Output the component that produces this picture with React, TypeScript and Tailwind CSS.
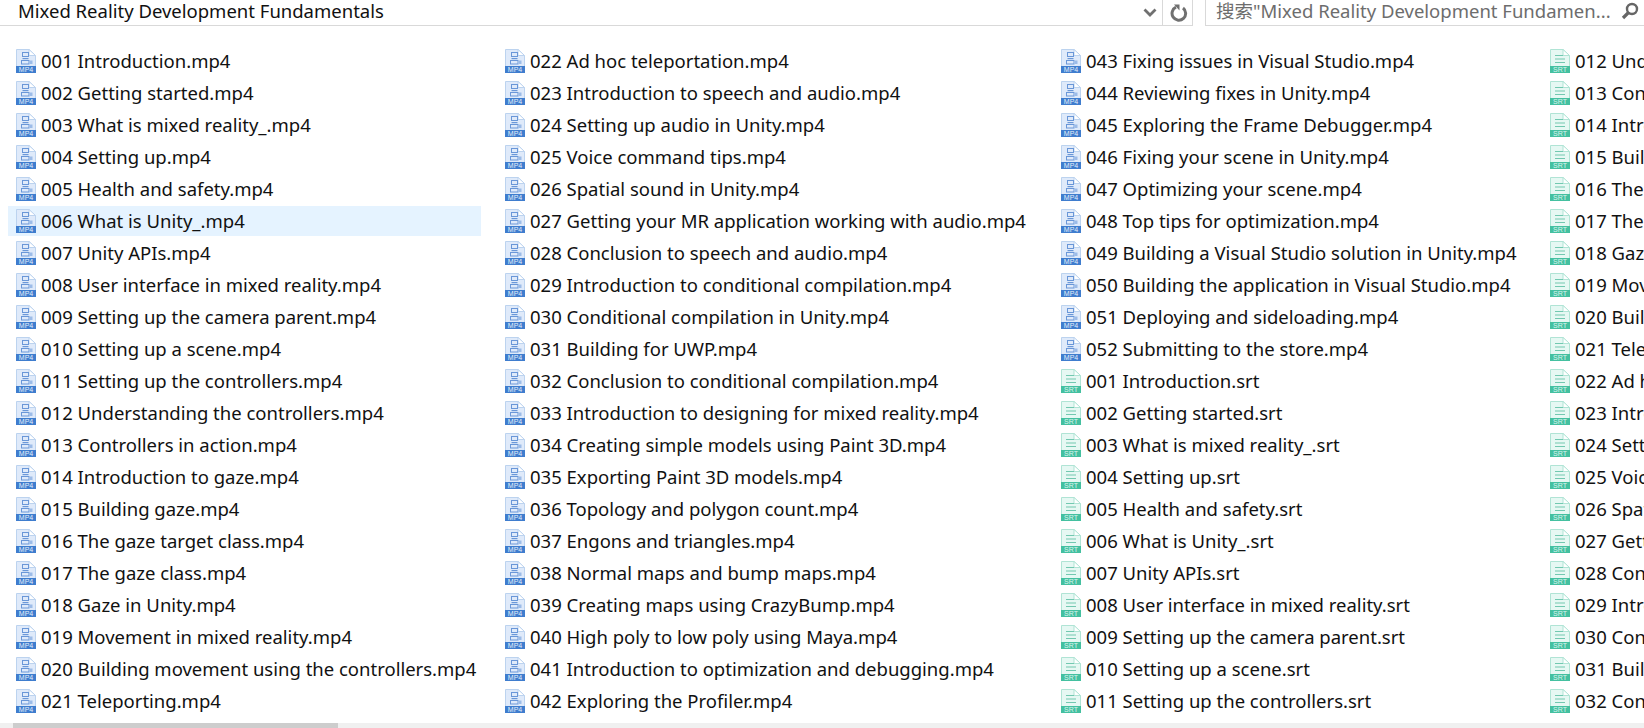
import React from "react";

const col1 = ["001 Introduction.mp4","002 Getting started.mp4","003 What is mixed reality_.mp4","004 Setting up.mp4","005 Health and safety.mp4","006 What is Unity_.mp4","007 Unity APIs.mp4","008 User interface in mixed reality.mp4","009 Setting up the camera parent.mp4","010 Setting up a scene.mp4","011 Setting up the controllers.mp4","012 Understanding the controllers.mp4","013 Controllers in action.mp4","014 Introduction to gaze.mp4","015 Building gaze.mp4","016 The gaze target class.mp4","017 The gaze class.mp4","018 Gaze in Unity.mp4","019 Movement in mixed reality.mp4","020 Building movement using the controllers.mp4","021 Teleporting.mp4"];
const col2 = ["022 Ad hoc teleportation.mp4","023 Introduction to speech and audio.mp4","024 Setting up audio in Unity.mp4","025 Voice command tips.mp4","026 Spatial sound in Unity.mp4","027 Getting your MR application working with audio.mp4","028 Conclusion to speech and audio.mp4","029 Introduction to conditional compilation.mp4","030 Conditional compilation in Unity.mp4","031 Building for UWP.mp4","032 Conclusion to conditional compilation.mp4","033 Introduction to designing for mixed reality.mp4","034 Creating simple models using Paint 3D.mp4","035 Exporting Paint 3D models.mp4","036 Topology and polygon count.mp4","037 Engons and triangles.mp4","038 Normal maps and bump maps.mp4","039 Creating maps using CrazyBump.mp4","040 High poly to low poly using Maya.mp4","041 Introduction to optimization and debugging.mp4","042 Exploring the Profiler.mp4"];
const col3 = ["043 Fixing issues in Visual Studio.mp4","044 Reviewing fixes in Unity.mp4","045 Exploring the Frame Debugger.mp4","046 Fixing your scene in Unity.mp4","047 Optimizing your scene.mp4","048 Top tips for optimization.mp4","049 Building a Visual Studio solution in Unity.mp4","050 Building the application in Visual Studio.mp4","051 Deploying and sideloading.mp4","052 Submitting to the store.mp4","001 Introduction.srt","002 Getting started.srt","003 What is mixed reality_.srt","004 Setting up.srt","005 Health and safety.srt","006 What is Unity_.srt","007 Unity APIs.srt","008 User interface in mixed reality.srt","009 Setting up the camera parent.srt","010 Setting up a scene.srt","011 Setting up the controllers.srt"];
const col4 = ["012 Understanding the controllers.srt","013 Controllers in action.srt","014 Introduction to gaze.srt","015 Building gaze.srt","016 The gaze target class.srt","017 The gaze class.srt","018 Gaze in Unity.srt","019 Movement in mixed reality.srt","020 Building movement using the controllers.srt","021 Teleporting.srt","022 Ad hoc teleportation.srt","023 Introduction to speech and audio.srt","024 Setting up audio in Unity.srt","025 Voice command tips.srt","026 Spatial sound in Unity.srt","027 Getting your MR application working with audio.srt","028 Conclusion to speech and audio.srt","029 Introduction to conditional compilation.srt","030 Conditional compilation in Unity.srt","031 Building for UWP.srt","032 Conclusion to conditional compilation.srt"];

function Mp4Icon() {
  return (
    <svg width="20" height="24" viewBox="0 0 20 24" className="shrink-0">
      <path d="M0.5 0.5H13L19.5 6.5V23.5H0.5Z" fill="#dfeafa" stroke="#bcd3ef" />
      <path d="M13 0.5V6.5H19.5Z" fill="#ffffff" stroke="#bcd3ef" />
      <rect x="6.5" y="3.5" width="6" height="4" fill="none" stroke="#6a97d8" strokeWidth="1" />
      <rect x="6.5" y="9" width="6" height="1.2" fill="#6a97d8" />
      <rect x="5.5" y="11.5" width="7.5" height="3.5" fill="none" stroke="#6a97d8" strokeWidth="1" />
      <rect x="14" y="11.5" width="2.5" height="3.5" fill="#9dbce8" />
      <rect x="0" y="17" width="20" height="7" fill="#3f7dce" />
      <text x="10" y="23" textAnchor="middle" fontSize="7" fontFamily="'Liberation Sans', sans-serif" fill="#e4eefa">MP4</text>
    </svg>
  );
}

function SrtIcon() {
  return (
    <svg width="20" height="24" viewBox="0 0 20 24" className="shrink-0">
      <path d="M0.5 0.5H13L19.5 6.5V23.5H0.5Z" fill="#e6f8f3" stroke="#b0e4d5" />
      <path d="M13 0.5V6.5H19.5Z" fill="#ffffff" stroke="#b0e4d5" />
      <rect x="5" y="6" width="8" height="1" fill="#72c8b0" />
      <rect x="5" y="9.5" width="10" height="1" fill="#72c8b0" />
      <rect x="5" y="13" width="10" height="1" fill="#72c8b0" />
      <rect x="0" y="17" width="20" height="7" fill="#44c0a0" />
      <text x="10" y="23" textAnchor="middle" fontSize="7" fontFamily="'Liberation Sans', sans-serif" fill="#dcf5ee">SRT</text>
    </svg>
  );
}

function Row({ name, kind, selected }: { name: string; kind: "mp4" | "srt"; selected?: boolean }) {
  return (
    <div className={`my-px flex h-[30px] items-center gap-[5px] pl-2 whitespace-nowrap ${selected ? "bg-[#e5f3ff]" : ""}`}>
      {kind === "mp4" ? <Mp4Icon /> : <SrtIcon />}
      <span>{name}</span>
    </div>
  );
}

function Column({ names, width, selected }: { names: string[]; width: string; selected?: string }) {
  return (
    <div className={`flex shrink-0 flex-col ${width}`}>
      {names.map((n) => (
        <div key={n} className="w-[473px]">
          <Row name={n} kind={n.endsWith("mp4") ? "mp4" : "srt"} selected={n === selected} />
        </div>
      ))}
    </div>
  );
}

export default function App() {
  return (
    <div className="flex h-[728px] w-[1644px] flex-col overflow-hidden bg-white font-['Noto_Sans','Noto_Sans_CJK_SC',sans-serif] text-[18.5px] leading-[24px] text-[#111111]">
      <div className="flex h-[26px] shrink-0 items-stretch leading-[20px]">
        <div className="flex flex-1 items-center border-b border-[#d9d9d9] pl-[18px] pb-[4px]">Mixed Reality Development Fundamentals</div>
        <div className="flex w-[28px] items-center justify-center border-b border-r border-[#d9d9d9] pl-[2px]">
          <svg width="14" height="10" viewBox="0 0 14 10"><path d="M1.5 1.5L7 7L12.5 1.5" fill="none" stroke="#707070" strokeWidth="2.8" /></svg>
        </div>
        <div className="flex w-[30px] items-center justify-center border-b border-r border-[#d9d9d9] pl-[2px]">
          <svg width="18" height="18" viewBox="0 0 18 18"><path d="M6 3.2A6.8 6.8 0 1 0 13 4" fill="none" stroke="#707070" strokeWidth="3" /><path d="M4 0.5H9.5V6.5Z" fill="#707070" /></svg>
        </div>
        <div className="w-[12px]" />
        <div className="flex w-[439px] items-center justify-between border-b border-l border-[#d9d9d9] pl-[10px] pb-[4px] pr-[5px] text-[#6d6d6d]">
          <span className="whitespace-nowrap">搜索"Mixed Reality Development Fundamen...</span>
          <svg width="18" height="18" viewBox="0 0 18 18" className="shrink-0"><circle cx="11" cy="7" r="5" fill="none" stroke="#666666" strokeWidth="2.4" /><path d="M7.5 10.5L2 16" stroke="#666666" strokeWidth="3.2" /></svg>
        </div>
      </div>
      <div className="flex flex-1 pt-[19px] pl-2">
        <Column names={col1} width="w-[489px]" selected="006 What is Unity_.mp4" />
        <Column names={col2} width="w-[556px]" />
        <Column names={col3} width="w-[489px]" />
        <Column names={col4} width="w-[490px]" />
      </div>
      <div className="flex h-[5px] shrink-0 bg-[#f0f0f0] pl-[13px]">
        <div className="h-full w-[325px] bg-[#cdcdcd]" />
      </div>
    </div>
  );
}
